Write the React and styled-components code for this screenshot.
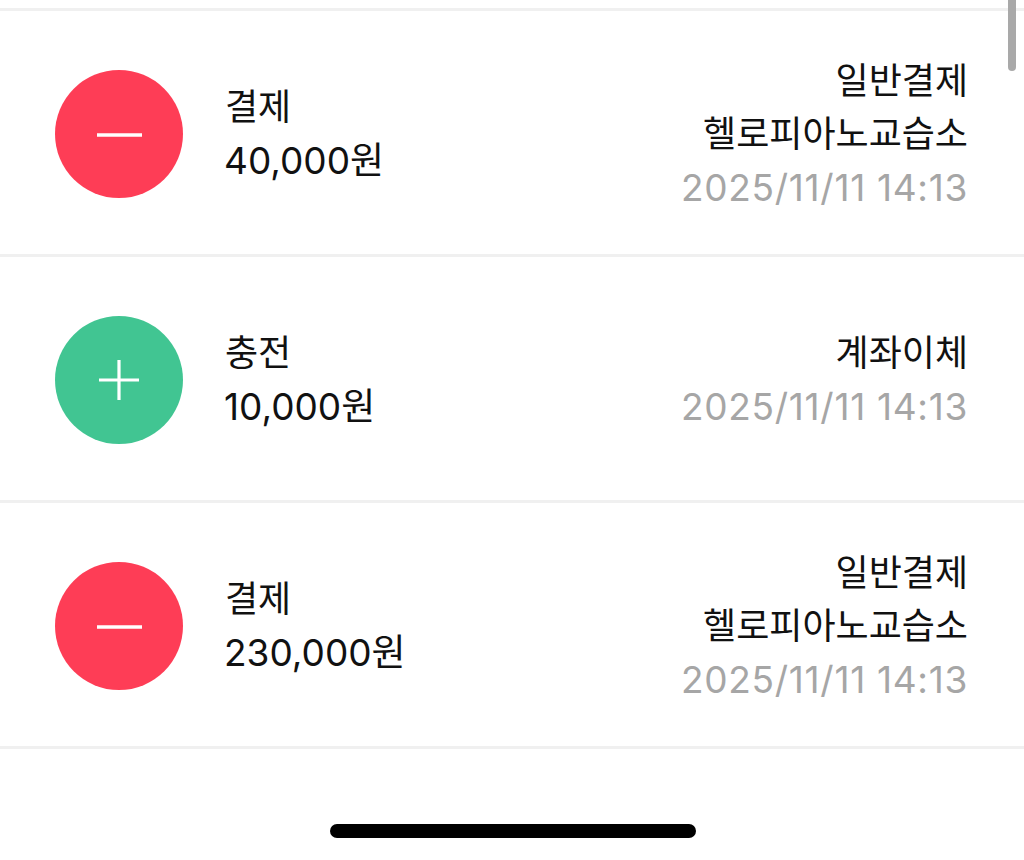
import styled, { createGlobalStyle } from 'styled-components'

const GlobalStyle = createGlobalStyle`
  html, body {
    margin: 0;
    padding: 0;
    background: #fff;
  }
  * {
    box-sizing: border-box;
  }
`

const Screen = styled.div`
  position: relative;
  width: 1024px;
  height: 860px;
  overflow: hidden;
  padding-top: 8px;
  background: #fff;
  font-family: Inter, "Noto Sans CJK KR", sans-serif;
  color: #111;
`

const List = styled.ul`
  margin: 0;
  padding: 0;
  list-style: none;
  border-top: 3px solid #f0f0f0;
`

const Row = styled.li`
  display: flex;
  align-items: center;
  justify-content: space-between;
  height: 246px;
  padding: 3px 56px 0 55px;
  border-bottom: 3px solid #f0f0f0;
`

const Left = styled.div`
  display: flex;
  align-items: center;
  gap: 42px;
`

const Badge = styled.div`
  display: flex;
  align-items: center;
  justify-content: center;
  width: 128px;
  height: 128px;
  border-radius: 50%;
  background: ${(p) => (p.$kind === 'plus' ? '#41c592' : '#fe3d56')};
`

const Summary = styled.div`
  display: flex;
  flex-direction: column;
  font-size: 36px;
  line-height: 53px;
`

const Amount = styled.span`
  font-size: 37px;
  margin-left: -1px;
`

const Right = styled.div`
  display: flex;
  flex-direction: column;
  align-items: flex-end;
  font-size: 36px;
  line-height: 53px;
`

const DateText = styled.span`
  color: #a6a6a6;
  font-size: 37px;
  letter-spacing: 0.7px;
`

const ScrollThumb = styled.div`
  position: absolute;
  top: -6px;
  right: 8px;
  width: 8px;
  height: 77px;
  border-radius: 4px;
  background: #a9a9a9;
`

const HomeBar = styled.div`
  position: absolute;
  left: 330px;
  top: 824px;
  width: 366px;
  height: 14px;
  border-radius: 7px;
  background: #000;
`

const items = [
  { kind: 'minus', title: '결제', amount: '40,000원', lines: ['일반결제', '헬로피아노교습소'] },
  { kind: 'plus', title: '충전', amount: '10,000원', lines: ['계좌이체'] },
  { kind: 'minus', title: '결제', amount: '230,000원', lines: ['일반결제', '헬로피아노교습소'] },
]

function SignIcon({ kind }) {
  if (kind === 'plus') {
    return (
      <svg width="40" height="40" viewBox="0 0 40 40" fill="none" stroke="#fff" strokeWidth="3.2">
        <path d="M0 20H40M20 0V40" />
      </svg>
    )
  }
  return (
    <svg width="45" height="46" viewBox="0 0 45 46" fill="none" stroke="#fff" strokeWidth="3.4">
      <path d="M0 24H45" />
    </svg>
  )
}

export default function App() {
  return (
    <Screen>
      <GlobalStyle />
      <List>
        {items.map((item, i) => (
          <Row key={i}>
            <Left>
              <Badge $kind={item.kind}>
                <SignIcon kind={item.kind} />
              </Badge>
              <Summary>
                <span>{item.title}</span>
                <Amount>{item.amount}</Amount>
              </Summary>
            </Left>
            <Right>
              {item.lines.map((line) => (
                <span key={line}>{line}</span>
              ))}
              <DateText>2025/11/11 14:13</DateText>
            </Right>
          </Row>
        ))}
      </List>
      <ScrollThumb />
      <HomeBar />
    </Screen>
  )
}
